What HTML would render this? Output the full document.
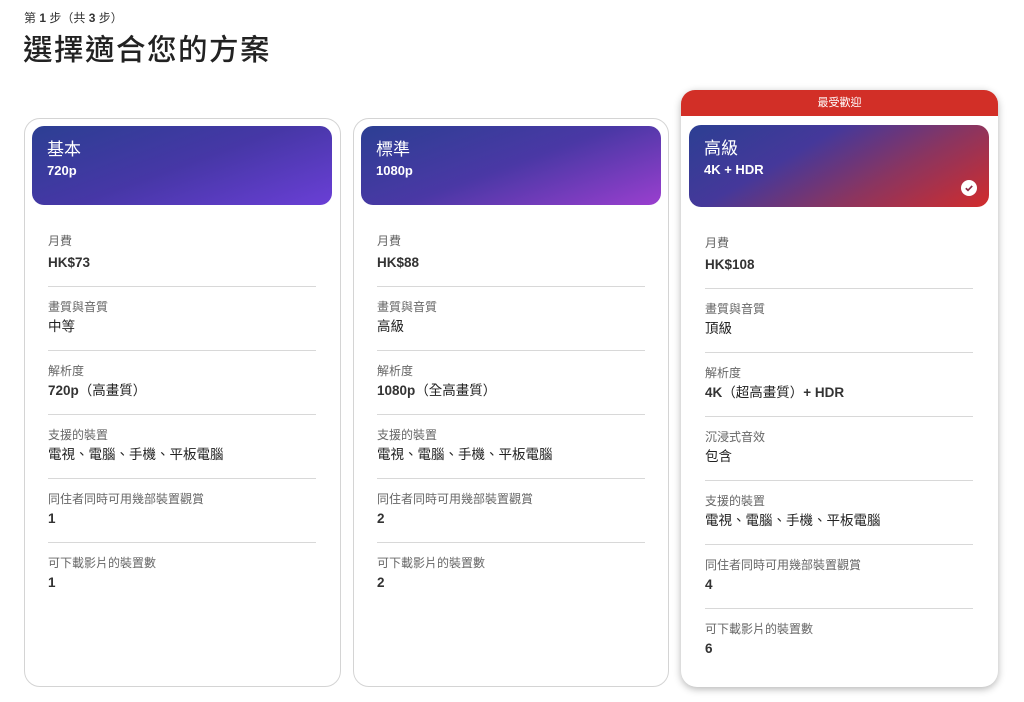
<!DOCTYPE html>
<html><head><meta charset="utf-8"><style>
*{margin:0;padding:0;box-sizing:border-box}
body{width:1024px;height:702px;background:#fff;font-family:"Liberation Sans","Noto Sans CJK TC",sans-serif;color:#222;position:relative;overflow:hidden}
.a{position:absolute}
.step{left:24px;top:9px;font-size:12px;color:#333}
h1{position:absolute;left:23px;top:27px;font-size:29.5px;font-weight:500;color:#222;letter-spacing:1.5px}
.card{position:absolute;border:1px solid #d4d4d4;border-radius:16px;background:#fff}
.hd{position:absolute;border-radius:12px;color:#fff}
.hd .t{position:absolute;left:15px;top:14px;font-size:17px;font-weight:400;line-height:20px}
.hd .s{position:absolute;left:15px;top:37px;font-size:13px;font-weight:bold;line-height:16px}
.lb{position:absolute;font-size:12px;color:#666;line-height:16px}
.vl{position:absolute;font-size:13.5px;font-weight:400;color:#222;line-height:18px}
.vl b{font-weight:bold;color:#333}
.dv{position:absolute;height:1px;background:#d8d8d8;width:268px}
</style></head><body>
<div class="a step">第 <b>1</b> 步（共 <b>3</b> 步）</div>
<h1>選擇適合您的方案</h1>

<div class="card" style="left:24px;top:118px;width:317px;height:569px"></div>
<div class="hd" style="left:32px;top:126px;width:300px;height:79px;background:linear-gradient(160deg,#2c3f93 0%,#4637a6 50%,#6a3fd6 100%)"><div class="t">基本</div><div class="s">720p</div></div>

<div class="card" style="left:353px;top:118px;width:316px;height:569px"></div>
<div class="hd" style="left:361px;top:126px;width:300px;height:79px;background:linear-gradient(160deg,#2c3f93 0%,#4a38a5 50%,#9a3fcf 100%)"><div class="t">標準</div><div class="s">1080p</div></div>

<div class="a" style="left:681px;top:90px;width:317px;height:597px;border-radius:16px;background:#fff;box-shadow:0 2px 8px rgba(0,0,0,.3)"></div>
<div class="a" style="left:681px;top:90px;width:317px;height:30px;border-radius:14px 14px 0 0;background:#d22f27;color:#fff;font-size:11px;text-align:center;line-height:27px">最受歡迎</div>
<div class="a" style="left:681px;top:116px;width:317px;height:10px;background:#fff"></div>
<div class="hd" style="left:689px;top:125px;width:300px;height:82px;background:linear-gradient(150deg,#2c3f93 0%,#45389a 35%,#8a3560 65%,#d22c2c 100%)"><div class="t">高級</div><div class="s">4K + HDR</div>
<svg class="a" style="left:272px;top:55px" width="16" height="16" viewBox="0 0 16 16"><circle cx="8" cy="8" r="8" fill="#fff"/><path d="M4.8 8.2l2.2 2.1 4.2-4.4" stroke="#8a2b45" stroke-width="1.7" fill="none"/></svg></div>

<!-- card 1 -->
<div class="lb" style="left:48px;top:233px">月費</div><div class="vl" style="left:48px;top:254px"><b>HK$73</b></div><div class="dv" style="left:48px;top:286px"></div>
<div class="lb" style="left:48px;top:299px">畫質與音質</div><div class="vl" style="left:48px;top:318px">中等</div><div class="dv" style="left:48px;top:350px"></div>
<div class="lb" style="left:48px;top:363px">解析度</div><div class="vl" style="left:48px;top:382px"><b>720p</b>（高畫質）</div><div class="dv" style="left:48px;top:414px"></div>
<div class="lb" style="left:48px;top:427px">支援的裝置</div><div class="vl" style="left:48px;top:446px">電視、電腦、手機、平板電腦</div><div class="dv" style="left:48px;top:478px"></div>
<div class="lb" style="left:48px;top:491px">同住者同時可用幾部裝置觀賞</div><div class="vl" style="left:48px;top:510px"><b>1</b></div><div class="dv" style="left:48px;top:542px"></div>
<div class="lb" style="left:48px;top:555px">可下載影片的裝置數</div><div class="vl" style="left:48px;top:574px"><b>1</b></div>

<!-- card 2 -->
<div class="lb" style="left:377px;top:233px">月費</div><div class="vl" style="left:377px;top:254px"><b>HK$88</b></div><div class="dv" style="left:377px;top:286px"></div>
<div class="lb" style="left:377px;top:299px">畫質與音質</div><div class="vl" style="left:377px;top:318px">高級</div><div class="dv" style="left:377px;top:350px"></div>
<div class="lb" style="left:377px;top:363px">解析度</div><div class="vl" style="left:377px;top:382px"><b>1080p</b>（全高畫質）</div><div class="dv" style="left:377px;top:414px"></div>
<div class="lb" style="left:377px;top:427px">支援的裝置</div><div class="vl" style="left:377px;top:446px">電視、電腦、手機、平板電腦</div><div class="dv" style="left:377px;top:478px"></div>
<div class="lb" style="left:377px;top:491px">同住者同時可用幾部裝置觀賞</div><div class="vl" style="left:377px;top:510px"><b>2</b></div><div class="dv" style="left:377px;top:542px"></div>
<div class="lb" style="left:377px;top:555px">可下載影片的裝置數</div><div class="vl" style="left:377px;top:574px"><b>2</b></div>

<!-- card 3 -->
<div class="lb" style="left:705px;top:235px">月費</div><div class="vl" style="left:705px;top:256px"><b>HK$108</b></div><div class="dv" style="left:705px;top:288px"></div>
<div class="lb" style="left:705px;top:301px">畫質與音質</div><div class="vl" style="left:705px;top:320px">頂級</div><div class="dv" style="left:705px;top:352px"></div>
<div class="lb" style="left:705px;top:365px">解析度</div><div class="vl" style="left:705px;top:384px"><b>4K</b>（超高畫質）<b>+ HDR</b></div><div class="dv" style="left:705px;top:416px"></div>
<div class="lb" style="left:705px;top:429px">沉浸式音效</div><div class="vl" style="left:705px;top:448px">包含</div><div class="dv" style="left:705px;top:480px"></div>
<div class="lb" style="left:705px;top:493px">支援的裝置</div><div class="vl" style="left:705px;top:512px">電視、電腦、手機、平板電腦</div><div class="dv" style="left:705px;top:544px"></div>
<div class="lb" style="left:705px;top:557px">同住者同時可用幾部裝置觀賞</div><div class="vl" style="left:705px;top:576px"><b>4</b></div><div class="dv" style="left:705px;top:608px"></div>
<div class="lb" style="left:705px;top:621px">可下載影片的裝置數</div><div class="vl" style="left:705px;top:640px"><b>6</b></div>
</body></html>
